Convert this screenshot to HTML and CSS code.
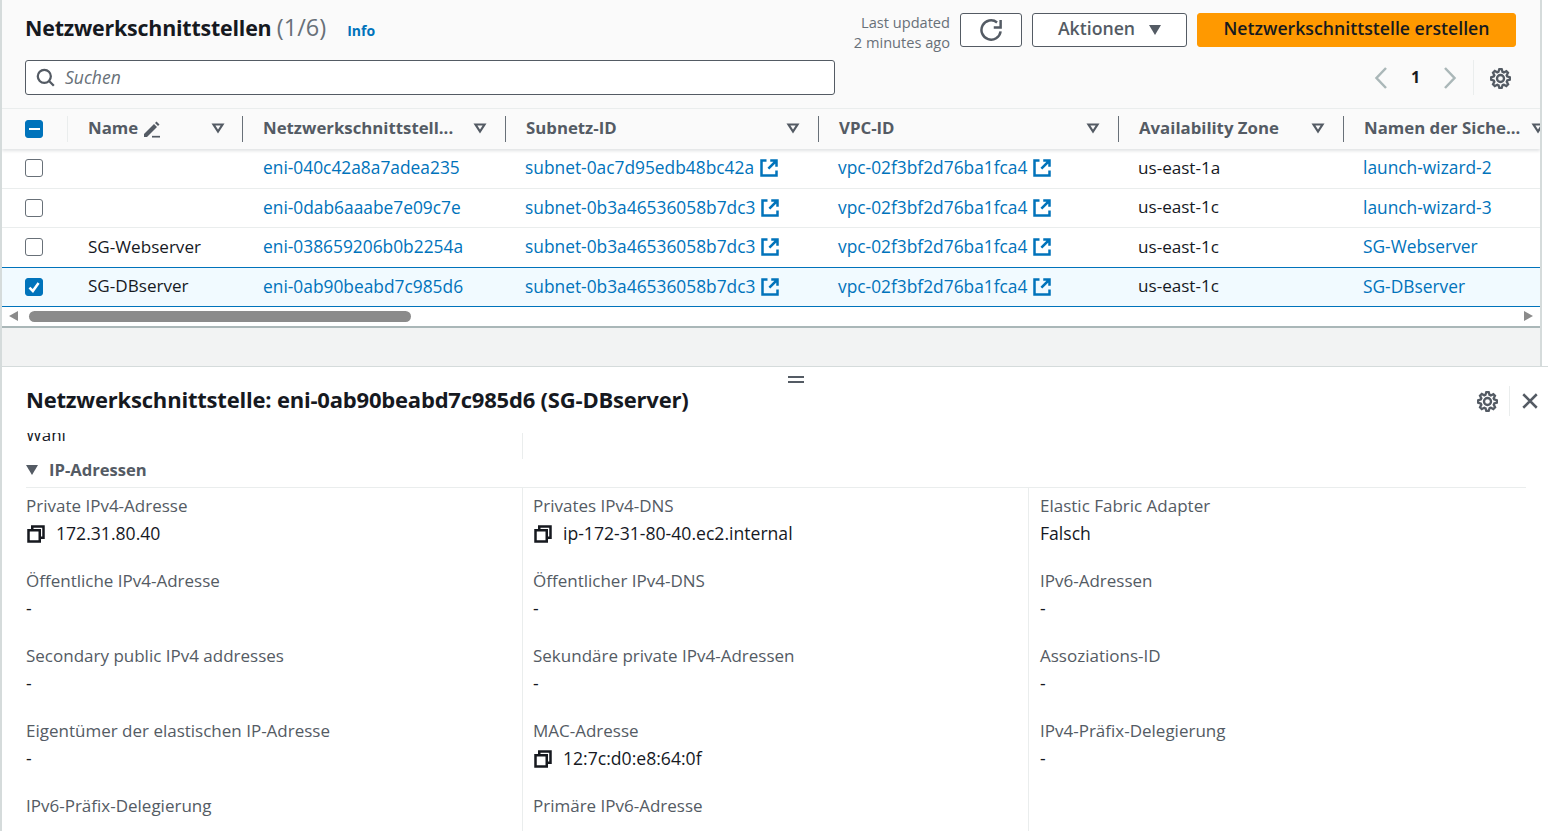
FILE: index.html
```html
<!DOCTYPE html>
<html lang="de">
<head>
  <meta charset="UTF-8">
  <title>Netzwerkschnittstellen</title>
  <link rel="stylesheet" href="styles.css">
</head>
<body>

  <svg class="sprite" width="0" height="0">
    <symbol id="ext" viewBox="0 0 16 16"><path d="M14 7V2H9M14 2 7.5 8.5M6 2H2v12h12v-4"/></symbol>
    <symbol id="copy" viewBox="0 0 16 16"><path d="M2 5h9v9H2z"/><path d="M5 5V2h9v9h-3"/></symbol>
    <symbol id="gear" viewBox="-1 -1 18 18"><path d="M13.3 5.2l1.1-2.1L13 1.7l-2.1 1.1c-.3-.2-.7-.3-1.1-.4L9 0H7l-.8 2.3c-.3.1-.7.2-1 .4L3.1 1.6 1.6 3.1l1.1 2.1c-.2.3-.3.7-.4 1L0 7v2l2.3.8c.1.4.3.7.4 1.1l-1.1 2.1 1.5 1.5 2.1-1.1c.3.2.7.3 1.1.4L7 16h2l.8-2.3c.4-.1.7-.3 1.1-.4l2.1 1.1 1.5-1.5-1.1-2.1c.2-.3.3-.7.4-1.1L16 9V7l-2.3-.8c-.1-.3-.2-.7-.4-1z"/><circle cx="8" cy="8" r="3"/></symbol>
    <symbol id="filter" viewBox="0 0 16 16"><path d="M3.500 4.500h9L8 11.500z"/></symbol>
  </svg>

  <section class="top">
    <div class="head">
      <h1 class="title">Netzwerkschnittstellen <span class="count">(1/6)</span></h1>
      <a class="info">Info</a>
      <div class="updated">Last updated<br>2 minutes ago</div>
      <button class="btn btn-refresh">
        <svg class="ico-refresh" viewBox="0 0 16 16"><path d="M15 9a7 7 0 1 1-2.600-6.500"/><path d="M15 .7v5.500H10"/></svg>
      </button>
      <button class="btn btn-actions">Aktionen <span class="caret"></span></button>
      <button class="btn btn-primary">Netzwerkschnittstelle erstellen</button>
    </div>

    <div class="tools">
      <div class="search">
        <svg class="ico-search" viewBox="0 0 16 16"><circle cx="7" cy="7" r="5.500"/><path d="M11 11l4 4"/></svg>
        <span>Suchen</span>
      </div>
      <div class="pager">
        <svg class="chev" viewBox="0 0 16 22"><path d="M13 1 3.500 11 13 21"/></svg>
        <span class="page">1</span>
        <svg class="chev" viewBox="0 0 16 22"><path d="M3 1l9.500 10L3 21"/></svg>
      </div>
      <div class="tool-gear"><svg class="ico gear"><use href="#gear"/></svg></div>
    </div>

    <div class="table">
      <div class="row row-head">
        <div class="cell cell-check"><span class="box box-mixed"></span></div>
        <div class="cell">Name
          <svg class="ico-pencil" viewBox="0 0 18 18"><path d="M1 17v-3L11 4l3 3L4 17z"/><path d="M12 3l1.500-1.500 3 3L15 6z"/><path class="pencil-line" d="M9 16.700h8"/></svg>
          <svg class="ico filter"><use href="#filter"/></svg>
        </div>
        <div class="cell"><span class="clip">Netzwerkschnittstell...</span><svg class="ico filter"><use href="#filter"/></svg></div>
        <div class="cell">Subnetz-ID<svg class="ico filter"><use href="#filter"/></svg></div>
        <div class="cell">VPC-ID<svg class="ico filter"><use href="#filter"/></svg></div>
        <div class="cell">Availability Zone<svg class="ico filter"><use href="#filter"/></svg></div>
        <div class="cell cell-last"><span class="clip">Namen der Siche...</span><svg class="ico filter"><use href="#filter"/></svg></div>
      </div>

      <div class="row">
        <div class="cell cell-check"><span class="box"></span></div>
        <div class="cell"></div>
        <div class="cell"><a>eni-040c42a8a7adea235</a></div>
        <div class="cell"><a>subnet-0ac7d95edb48bc42a</a><svg class="ico ext"><use href="#ext"/></svg></div>
        <div class="cell"><a>vpc-02f3bf2d76ba1fca4</a><svg class="ico ext"><use href="#ext"/></svg></div>
        <div class="cell">us-east-1a</div>
        <div class="cell"><a>launch-wizard-2</a></div>
      </div>
      <div class="row">
        <div class="cell cell-check"><span class="box"></span></div>
        <div class="cell"></div>
        <div class="cell"><a>eni-0dab6aaabe7e09c7e</a></div>
        <div class="cell"><a>subnet-0b3a46536058b7dc3</a><svg class="ico ext"><use href="#ext"/></svg></div>
        <div class="cell"><a>vpc-02f3bf2d76ba1fca4</a><svg class="ico ext"><use href="#ext"/></svg></div>
        <div class="cell">us-east-1c</div>
        <div class="cell"><a>launch-wizard-3</a></div>
      </div>
      <div class="row">
        <div class="cell cell-check"><span class="box"></span></div>
        <div class="cell">SG-Webserver</div>
        <div class="cell"><a>eni-038659206b0b2254a</a></div>
        <div class="cell"><a>subnet-0b3a46536058b7dc3</a><svg class="ico ext"><use href="#ext"/></svg></div>
        <div class="cell"><a>vpc-02f3bf2d76ba1fca4</a><svg class="ico ext"><use href="#ext"/></svg></div>
        <div class="cell">us-east-1c</div>
        <div class="cell"><a>SG-Webserver</a></div>
      </div>
      <div class="row row-selected">
        <div class="cell cell-check">
          <span class="box box-checked"><svg viewBox="0 0 14 14"><path d="M3 7.500 6 10.500 11 3.500"/></svg></span>
        </div>
        <div class="cell">SG-DBserver</div>
        <div class="cell"><a>eni-0ab90beabd7c985d6</a></div>
        <div class="cell"><a>subnet-0b3a46536058b7dc3</a><svg class="ico ext"><use href="#ext"/></svg></div>
        <div class="cell"><a>vpc-02f3bf2d76ba1fca4</a><svg class="ico ext"><use href="#ext"/></svg></div>
        <div class="cell">us-east-1c</div>
        <div class="cell"><a>SG-DBserver</a></div>
      </div>
    </div>

    <div class="hscroll">
      <span class="arrow arrow-left"></span>
      <span class="thumb"></span>
      <span class="arrow arrow-right"></span>
    </div>
    <div class="gutter"></div>
  </section>

  <section class="split">
    <div class="handle"></div>
    <div class="split-head">
      <h2 class="split-title">Netzwerkschnittstelle: eni-0ab90beabd7c985d6 (SG-DBserver)</h2>
      <svg class="ico split-gear"><use href="#gear"/></svg>
      <div class="split-close">
        <svg class="ico-close" viewBox="0 0 16 16"><path d="M2 2l12 12M14 2 2 14"/></svg>
      </div>
    </div>

    <div class="split-body">
      <div class="cut">
        <div class="cut-col"><span class="cut-text">Wahl</span></div>
        <div class="cut-col cut-col-line"></div>
      </div>

      <div class="group-head"><span class="group-caret"></span>IP-Adressen</div>

      <div class="grid">
        <div class="item"><div class="label">Private IPv4-Adresse</div><div class="value"><svg class="ico copy"><use href="#copy"/></svg>172.31.80.40</div></div>
        <div class="item"><div class="label">Privates IPv4-DNS</div><div class="value"><svg class="ico copy"><use href="#copy"/></svg>ip-172-31-80-40.ec2.internal</div></div>
        <div class="item"><div class="label">Elastic Fabric Adapter</div><div class="value">Falsch</div></div>

        <div class="item"><div class="label">Öffentliche IPv4-Adresse</div><div class="value">-</div></div>
        <div class="item"><div class="label">Öffentlicher IPv4-DNS</div><div class="value">-</div></div>
        <div class="item"><div class="label">IPv6-Adressen</div><div class="value">-</div></div>

        <div class="item"><div class="label">Secondary public IPv4 addresses</div><div class="value">-</div></div>
        <div class="item"><div class="label">Sekundäre private IPv4-Adressen</div><div class="value">-</div></div>
        <div class="item"><div class="label">Assoziations-ID</div><div class="value">-</div></div>

        <div class="item"><div class="label">Eigentümer der elastischen IP-Adresse</div><div class="value">-</div></div>
        <div class="item"><div class="label">MAC-Adresse</div><div class="value"><svg class="ico copy"><use href="#copy"/></svg>12:7c:d0:e8:64:0f</div></div>
        <div class="item"><div class="label">IPv4-Präfix-Delegierung</div><div class="value">-</div></div>

        <div class="item"><div class="label">IPv6-Präfix-Delegierung</div></div>
        <div class="item"><div class="label">Primäre IPv6-Adresse</div></div>
        <div class="item"></div>
      </div>
    </div>
  </section>

</body>
</html>
```

FILE: styles.css
```css
* {
  box-sizing: border-box;
}
html, body {
  height: 831px;
  overflow: hidden;
}
body {
  margin: 0;
  font-family: "Open Sans", "Noto Sans", sans-serif;
  font-size: 17px;
  color: #16191f;
  background-color: #fff;
}
a {
  color: #0073bb;
}
.sprite {
  position: absolute;
}
.ico {
  fill: none;
  stroke: currentColor;
  stroke-width: 2;
  flex: none;
}

/* top panel */
.top {
  width: 1542px;
  height: 366px;
  background-color: #fafafa;
  border-left: 2px solid #d5dbdb;
  border-right: 2px solid #d5dbdb;
}
.head {
  display: flex;
  align-items: center;
  height: 60px;
  padding: 13px 24px 13px 23px;
}
.title {
  margin: 0 0 6px;
  font-size: 21.400px;
  font-weight: 700;
  letter-spacing: -0.2px;
}
.count {
  font-weight: 400;
  font-size: 23.500px;
  letter-spacing: 0;
  color: #687078;
}
.info {
  margin: 0 0 0 21px;
  font-size: 14px;
  font-weight: 700;
}
.updated {
  margin: 4px 0 0 auto;
  font-size: 14.600px;
  line-height: 20px;
  text-align: right;
  color: #687078;
}
.btn {
  height: 34px;
  margin-left: 10px;
  padding: 0 0 4px;
  border: 1px solid #545b64;
  border-radius: 3px;
  background-color: #fff;
  color: #545b64;
  font-family: inherit;
  font-size: 17.700px;
  font-weight: 600;
  display: flex;
  align-items: center;
  justify-content: center;
}
.btn-refresh {
  width: 62px;
  padding: 0;
}
.ico-refresh {
  width: 22px;
  height: 22px;
  fill: none;
  stroke: #545b64;
  stroke-width: 1.800;
}
.btn-actions {
  width: 155px;
  gap: 14px;
}
.caret {
  width: 0;
  height: 0;
  margin-top: 4px;
  border-left: 6.500px solid transparent;
  border-right: 6.500px solid transparent;
  border-top: 10px solid #545b64;
}
.btn-primary {
  width: 319px;
  border-color: #ff9900;
  background-color: #ff9900;
  color: #16191f;
}

.tools {
  display: flex;
  align-items: center;
  height: 35px;
  padding-left: 23px;
}
.search {
  display: flex;
  align-items: center;
  gap: 10px;
  width: 810px;
  height: 35px;
  padding: 0 0 2px 10px;
  background-color: #fff;
  border: 1px solid #545b64;
  border-radius: 3px;
  font-size: 17.500px;
  font-style: italic;
  color: #687078;
}
.ico-search {
  width: 19px;
  height: 19px;
  margin-top: 2px;
  fill: none;
  stroke: #545b64;
  stroke-width: 1.900;
}
.pager {
  display: flex;
  align-items: center;
  margin-left: 538px;
  gap: 22px;
}
.chev {
  width: 16px;
  height: 22px;
  fill: none;
  stroke: #aab7b8;
  stroke-width: 2.500;
}
.page {
  width: 9px;
  padding-bottom: 2px;
  font-size: 16px;
  font-weight: 700;
  text-align: center;
}
.tool-gear {
  display: flex;
  align-items: center;
  height: 35px;
  margin-left: 15px;
  padding-left: 16px;
  border-left: 1px solid #eaeded;
  color: #545b64;
}
.gear {
  width: 21px;
  height: 21px;
  margin-top: 2px;
}

/* table */
.table {
  margin-top: 13px;
  overflow: hidden;
}
.row {
  display: grid;
  grid-template-columns: 66px 175px 262px 313px 300px 225px 220px;
  align-items: center;
  height: 39.500px;
  border-bottom: 1px solid #eaeded;
  background-color: #fff;
}
.row-head {
  height: 41px;
  background-color: #fafafa;
  border-top: 1px solid #eaeded;
  border-bottom: none;
  font-weight: 700;
  color: #545b64;
  box-shadow: 0 2px 3px rgba(0, 28, 36, 0.12);
  position: relative;
}
.row-selected {
  height: 40.500px;
  margin-top: -1px;
  background-color: #f1faff;
  border-top: 1px solid #0073bb;
  border-bottom: 1px solid #0073bb;
  position: relative;
}
.cell {
  display: flex;
  align-items: center;
  padding: 0 0 2px 20px;
  white-space: nowrap;
  font-size: 17.100px;
}
.cell a {
  font-size: 17.350px;
}
.cell-check {
  padding: 0 0 0 23px;
}
.row-head .cell {
  height: 26px;
  padding-right: 17px;
  padding-bottom: 3px;
  border-left: 1px solid #687078;
  font-size: 16.800px;
}
.row-head .cell-check {
  padding: 0 0 0 23px;
  border-left: none;
  border-right: 1px solid #eaeded;
}
.row-head .cell:nth-child(2) {
  border-left: none;
  padding-left: 20px;
  padding-right: 16px;
  border-right: 1px solid #687078;
}
.row-head .cell:nth-child(3) {
  border-left: none;
}
.clip {
  overflow: hidden;
}
.filter {
  width: 16px;
  height: 16px;
  margin-left: auto;
  color: #545b64;
  stroke-width: 2.200;
}
.ico-pencil {
  width: 18px;
  height: 18px;
  margin: 3px 0 0 5px;
  fill: #545b64;
  stroke: none;
}
.pencil-line {
  fill: none;
  stroke: #545b64;
  stroke-width: 1.700;
}
.ext {
  width: 20px;
  height: 20px;
  margin: 2px 0 0 5px;
  color: #0073bb;
}
.box {
  display: flex;
  width: 18px;
  height: 18px;
  border: 1.500px solid #687078;
  border-radius: 3px;
  background-color: #fff;
}
.box-mixed, .box-checked {
  border-color: #0073bb;
  background-color: #0073bb;
}
.box-mixed::after {
  content: "";
  width: 11px;
  height: 2.500px;
  margin: auto;
  background-color: #fff;
}
.box-checked svg {
  width: 100%;
  height: 100%;
  fill: none;
  stroke: #fff;
  stroke-width: 2.200;
}

.hscroll {
  display: flex;
  align-items: center;
  height: 21px;
  padding: 0 7px 1px;
  background-color: #fff;
  border-bottom: 2px solid #aab7b8;
}
.thumb {
  width: 382px;
  height: 11px;
  margin-left: 11px;
  border-radius: 6px;
  background-color: #8b8b8b;
}
.arrow {
  width: 0;
  height: 0;
  border-top: 5.500px solid transparent;
  border-bottom: 5.500px solid transparent;
}
.arrow-left {
  border-right: 9px solid #8b8b8b;
}
.arrow-right {
  margin-left: auto;
  border-left: 9px solid #8b8b8b;
}
.gutter {
  height: 38px;
  background-color: #f2f3f3;
}

/* split panel */
.split {
  position: relative;
  height: 465px;
  border-top: 1px solid #d5dbdb;
  border-left: 2px solid #d5dbdb;
  background-color: #fff;
}
.handle {
  position: absolute;
  top: 9px;
  left: 786px;
  width: 16px;
  height: 7px;
  border-top: 2px solid #545b64;
  border-bottom: 2px solid #545b64;
}
.split-head {
  display: flex;
  align-items: center;
  height: 61px;
  padding: 4px 0 0 24px;
}
.split-title {
  margin: 0 0 2px;
  font-size: 22px;
  font-weight: 700;
  letter-spacing: -0.2px;
}
.split-gear {
  width: 21px;
  height: 21px;
  margin: 3px 0 0 auto;
  color: #545b64;
}
.split-close {
  display: flex;
  align-items: center;
  height: 30px;
  margin: 3px 9px 0 11px;
  padding-left: 11px;
  border-left: 1px solid #eaeded;
}
.ico-close {
  width: 18px;
  height: 18px;
  fill: none;
  stroke: #545b64;
  stroke-width: 2.200;
}

.split-body {
  padding: 0 22px 0 24px;
}
.cut {
  display: flex;
  height: 33px;
  padding-top: 5px;
}
.cut-col {
  width: 496px;
  height: 13px;
  overflow: hidden;
}
.cut-col-line {
  height: 26px;
  border-left: 1px solid #eaeded;
}
.cut-text {
  display: block;
  margin-top: -10px;
  line-height: 24px;
}
.group-head {
  display: flex;
  align-items: center;
  height: 27px;
  padding-bottom: 9px;
  border-bottom: 1px solid #eaeded;
  font-size: 16.600px;
  font-weight: 700;
  color: #545b64;
}
.group-caret {
  width: 0;
  height: 0;
  margin-right: 11px;
  border-left: 6.500px solid transparent;
  border-right: 6.500px solid transparent;
  border-top: 10px solid #545b64;
}
.grid {
  display: grid;
  grid-template-columns: 496px 507px 1fr;
  grid-auto-rows: 75px;
}
.item {
  padding-top: 4px;
}
.item:nth-child(3n+2) {
  border-left: 1px solid #eaeded;
  border-right: 1px solid #eaeded;
  padding-left: 10px;
}
.item:nth-child(3n) {
  padding-left: 11px;
}
.label {
  height: 28px;
  line-height: 28px;
  color: #545b64;
}
.value {
  display: flex;
  align-items: center;
  height: 28px;
  padding-bottom: 2px;
  font-size: 17.600px;
}
.copy {
  width: 20px;
  height: 20px;
  margin: 2px 10px 0 0;
  color: #16191f;
}
```
